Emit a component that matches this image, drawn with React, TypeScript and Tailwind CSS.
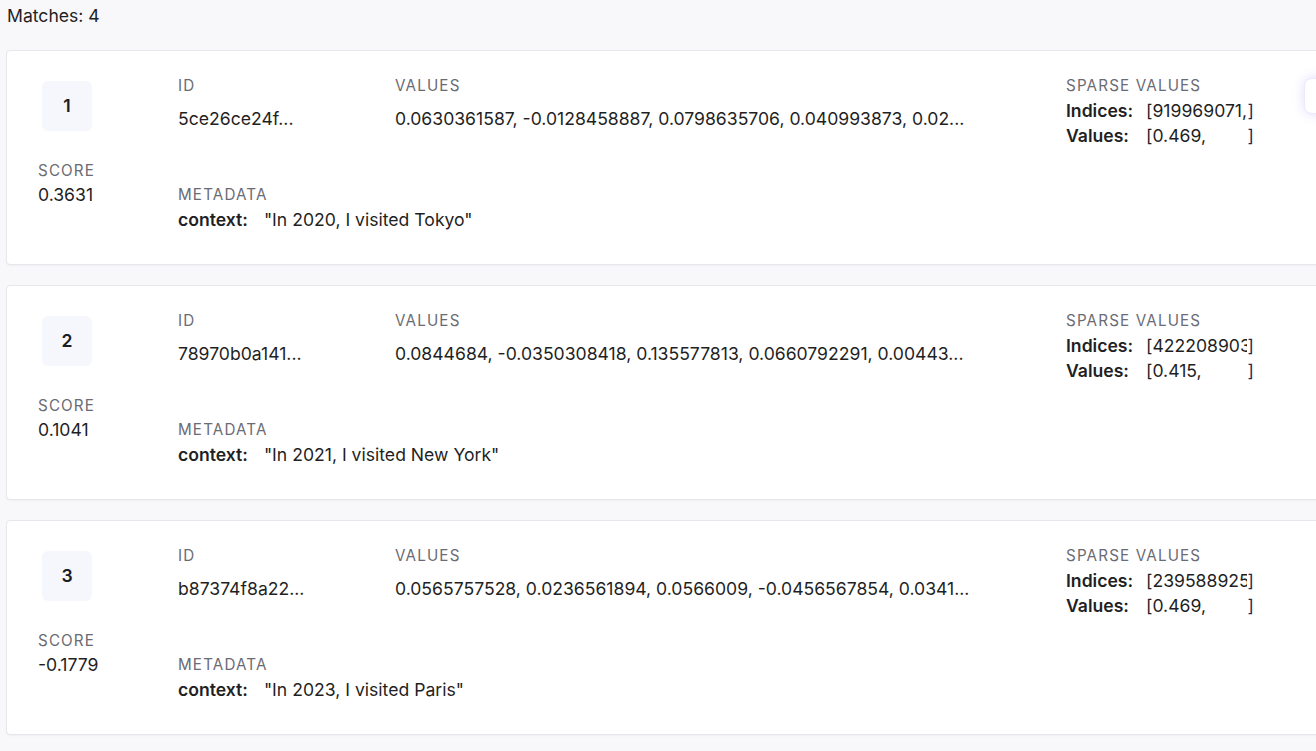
import React from 'react'

interface Match {
  rank: number
  score: string
  id: string
  values: string
  indices: string
  sparse: string
  context: string
  focused?: boolean
}

const matches: Match[] = [
  {
    rank: 1,
    score: '0.3631',
    id: '5ce26ce24f...',
    values: '0.0630361587, -0.0128458887, 0.0798635706, 0.040993873, 0.02...',
    indices: '919969071,',
    sparse: '0.469,',
    context: '"In 2020, I visited Tokyo"',
    focused: true,
  },
  {
    rank: 2,
    score: '0.1041',
    id: '78970b0a141...',
    values: '0.0844684, -0.0350308418, 0.135577813, 0.0660792291, 0.00443...',
    indices: '4222089031,',
    sparse: '0.415,',
    context: '"In 2021, I visited New York"',
  },
  {
    rank: 3,
    score: '-0.1779',
    id: 'b87374f8a22...',
    values: '0.0565757528, 0.0236561894, 0.0566009, -0.0456567854, 0.0341...',
    indices: '239588925',
    sparse: '0.469,',
    context: '"In 2023, I visited Paris"',
  },
]

const Label: React.FC<{ children: React.ReactNode }> = ({ children }) => (
  <div className="text-[15.2px] leading-5 tracking-[0.075em] uppercase text-[#6b6b73] whitespace-nowrap">
    {children}
  </div>
)

const MatchCard: React.FC<{ m: Match }> = ({ m }) => (
  <div className="relative w-[1340px] bg-white border border-[#e6e6ec] rounded-[4px] shadow-[0_1px_2px_rgba(0,0,0,0.04)] flex pl-[31px] pt-[25px] pb-[32px]">
    <div className="w-[140px] shrink-0 flex flex-col">
      <div className="ml-[4px] mt-[5px] w-[50px] h-[50px] rounded-[6px] bg-[#f6f7fd] flex items-center justify-center font-semibold text-[17.6px] text-[#1c1c22]">
        {m.rank}
      </div>
      <div className="mt-[30px]">
        <Label>Score</Label>
      </div>
      <div className="mt-[2px] text-[17.6px] leading-6">{m.score}</div>
    </div>

    <div className="flex flex-col">
      <div className="flex items-start">
        <div className="w-[217px] shrink-0">
          <Label>ID</Label>
          <div className="mt-[11px] text-[17.6px] leading-6 whitespace-nowrap">{m.id}</div>
        </div>
        <div className="w-[671px] shrink-0">
          <Label>Values</Label>
          <div className="mt-[11px] text-[17.6px] leading-6 whitespace-nowrap">{m.values}</div>
        </div>
        <div className="w-[240px] shrink-0">
          <Label>Sparse Values</Label>
          <div className="mt-[2px] flex text-[17.6px] leading-[25px] whitespace-nowrap">
            <span className="font-semibold w-[80px]">Indices:</span>
            <span>[</span>
            <span className="inline-block w-[95px] overflow-hidden">{m.indices}</span>
            <span className="text-[#1e2a5a]">]</span>
          </div>
          <div className="flex text-[17.6px] leading-[25px] whitespace-nowrap">
            <span className="font-semibold w-[80px]">Values:</span>
            <span>[</span>
            <span className="inline-block w-[95px] overflow-hidden">{m.sparse}</span>
            <span className="text-[#1e2a5a]">]</span>
          </div>
        </div>
      </div>
      <div className="mt-[37px]">
        <Label>Metadata</Label>
        <div className="mt-[3px] text-[17.6px] leading-6 whitespace-nowrap">
          <span className="font-semibold mr-[16px]">context:</span>
          <span>{m.context}</span>
        </div>
      </div>
    </div>

    {m.focused && (
      <div className="absolute left-[1297px] top-[27px] w-[40px] h-[36px] rounded-[8px] bg-white border border-[#ebeafa] shadow-[0_0_12px_rgba(110,100,240,0.22)]" />
    )}
  </div>
)

export default function App() {
  return (
    <div
      className="w-screen min-h-screen overflow-hidden bg-[#f8f8fa] text-[#1f1f24] pl-[6px] pt-[4px] pb-[20px]"
      style={{ fontFamily: 'Inter, "Noto Sans", sans-serif' }}
    >
      <div className="pl-[1px] text-[17.6px] leading-6">Matches: 4</div>
      <div className="mt-[22px] flex flex-col gap-[20px]">
        {matches.map((m) => (
          <MatchCard key={m.rank} m={m} />
        ))}
      </div>
    </div>
  )
}
